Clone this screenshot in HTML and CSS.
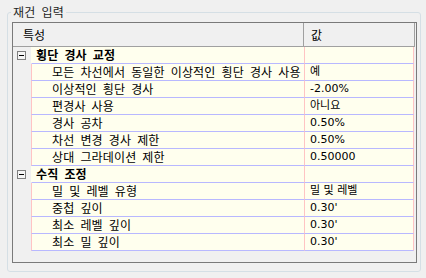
FILE: index.html
```html
<!DOCTYPE html>
<html lang="ko">
<head>
    <meta charset="UTF-8">
    <title>재건 입력</title>
    <link rel="stylesheet" href="styles.css">
</head>
<body>
    <div class="group">
        <div class="legend">재건 입력</div>
        <div class="grid">
            <div class="head">
                <div class="hname">특성</div>
                <div class="hval">값</div>
            </div>

            <div class="row cat">
                <div class="gutter"><svg class="box" width="9" height="9" viewBox="0 0 9 9"><rect x="0.5" y="0.5" width="8" height="8" fill="#f4f4f4" stroke="#7f7f7f"/><path d="M2 4.5h5" stroke="#000"/></svg></div>
                <div class="name">횡단 경사 교정</div>
                <div class="val"></div>
            </div>
            <div class="row"><div class="gutter"></div><div class="name">모든 차선에서 동일한 이상적인 횡단 경사 사용</div><div class="val">예</div></div>
            <div class="row"><div class="gutter"></div><div class="name">이상적인 횡단 경사</div><div class="val">-2.00%</div></div>
            <div class="row"><div class="gutter"></div><div class="name">편경사 사용</div><div class="val">아니요</div></div>
            <div class="row"><div class="gutter"></div><div class="name">경사 공차</div><div class="val">0.50%</div></div>
            <div class="row"><div class="gutter"></div><div class="name">차선 변경 경사 제한</div><div class="val">0.50%</div></div>
            <div class="row"><div class="gutter"></div><div class="name">상대 그라데이션 제한</div><div class="val">0.50000</div></div>

            <div class="row cat">
                <div class="gutter"><svg class="box" width="9" height="9" viewBox="0 0 9 9"><rect x="0.5" y="0.5" width="8" height="8" fill="#f4f4f4" stroke="#7f7f7f"/><path d="M2 4.5h5" stroke="#000"/></svg></div>
                <div class="name">수직 조정</div>
                <div class="val"></div>
            </div>
            <div class="row"><div class="gutter"></div><div class="name">밀 및 레벨 유형</div><div class="val">밀 및 레벨</div></div>
            <div class="row"><div class="gutter"></div><div class="name">중첩 깊이</div><div class="val">0.30'</div></div>
            <div class="row"><div class="gutter"></div><div class="name">최소 레벨 깊이</div><div class="val">0.30'</div></div>
            <div class="row"><div class="gutter"></div><div class="name">최소 밀 깊이</div><div class="val">0.30'</div></div>
        </div>
    </div>
</body>
</html>
```

FILE: styles.css
```css
body { margin: 0; background: #f0f0f0; font-family: Tahoma, "DejaVu Sans", "Noto Sans CJK KR", sans-serif; font-size: 11px; color: #000; }
.group { margin: 12px 0 0 7px; width: 405px; height: 258px; border: 1px solid #d5dfe5; border-radius: 3px; padding: 0 3px 0 4px; }
.legend { display: table; margin: -9px 0 2px -1px; padding: 0 2px; height: 16px; line-height: 16px; background: #f0f0f0; font-family: "Noto Sans CJK KR", sans-serif; font-size: 12px; word-spacing: 2.5px; letter-spacing: 0.2px; color: #1e1e1e; }
.grid { box-sizing: border-box; height: 241px; border: 1px solid #7a7a7a; background: #f0f0f0; }
.head { display: flex; height: 23px; border-bottom: 1px solid #a0a0a0; margin-right: 1px; }
.hname { width: 280px; padding-left: 10px; border-right: 1px solid #a0a0a0; line-height: 23px; font-family: "Noto Sans CJK KR", sans-serif; font-size: 12px; }
.hval { flex: 1; padding-left: 7px; border-right: 1px solid #a0a0a0; line-height: 23px; font-family: "Noto Sans CJK KR", sans-serif; font-size: 12px; }
.row { display: grid; grid-template-columns: 18px 273px 110px; height: 17px; }
.gutter { display: flex; align-items: center; padding-left: 4px; }
.name { background: #ffffee; border-left: 1px solid #ffc4c4; border-bottom: 1px solid #b8b8ff; padding-left: 20px; line-height: 16px; font-family: "Noto Sans CJK KR", sans-serif; font-size: 12px; word-spacing: 2.5px; letter-spacing: 0.15px; white-space: nowrap; overflow: hidden; }
.val { background: #ffffee; border-left: 1px solid #ffc4c4; border-right: 1px solid #ffc4c4; border-bottom: 1px solid #b8b8ff; padding-left: 5px; line-height: 16px; white-space: nowrap; }
.cat .name { border-left-color: #ffffee; padding-left: 4px; font-weight: bold; }
```
